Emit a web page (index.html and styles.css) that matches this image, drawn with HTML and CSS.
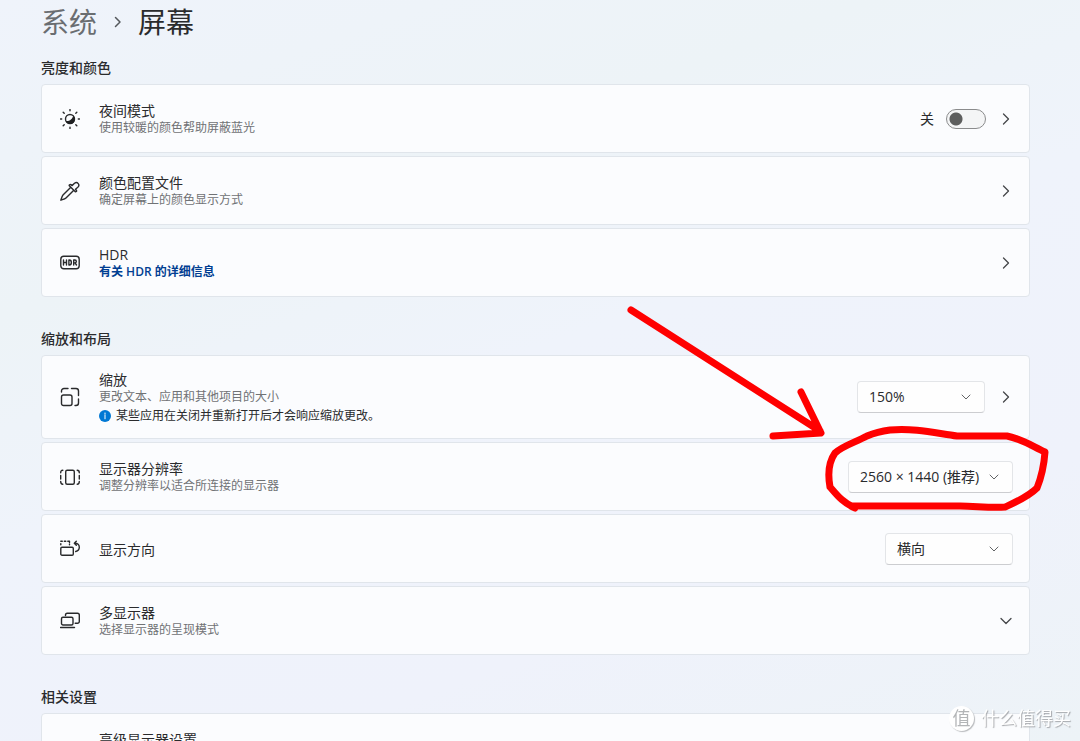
FILE: index.html
```html
<!DOCTYPE html>
<html lang="zh-CN">
<head>
<meta charset="utf-8">
<meta name="viewport" content="width=device-width, initial-scale=1">
<title>系统 › 屏幕</title>
<link rel="stylesheet" href="styles.css">
</head>
<body>
<main class="page">
  <h1 class="crumbs">
    <a class="crumb-parent" href="#system">系统</a>
    <svg class="crumb-sep" viewBox="0 0 12 14"><path d="M3.500 2.500 8 7l-4.500 4.500"/></svg>
    <span>屏幕</span>
  </h1>

  <section class="group">
    <h2 class="group-title">亮度和颜色</h2>
    <div class="card">
      <svg class="icon" viewBox="0 0 20 20"><circle cx="10" cy="10" r="4.500"/><path class="solid" d="M13.200 6.600A4.800 4.800 0 1 1 5.600 12c3.600.6 7-1.500 7.600-5.400z"/><path d="M10 .5v1.200M10 18.300v1.200M.5 10h1.200M18.300 10h1.200M3.200 3.200l1 1M15.800 15.800l1 1M3.200 16.800l1-1M15.800 4.200l1-1"/></svg>
      <div class="text">
        <label class="name" for="night">夜间模式</label>
        <span class="desc">使用较暖的颜色帮助屏蔽蓝光</span>
      </div>
      <span class="state">关</span>
      <input class="toggle" id="night" type="checkbox" role="switch">
      <button class="more" aria-label="夜间模式设置"><svg class="chevron" viewBox="0 0 14 14"><path d="M4.500 2 9.500 7l-5 5"/></svg></button>
    </div>
    <div class="card">
      <svg class="icon" viewBox="0 0 20 20"><path d="M10.800 6.200 3 14c-.7.700-1.300 2.600-2.200 5.200 2.600-.9 4.500-1.500 5.200-2.200l7.800-7.800M9.300 4.700l6 6c.5.500 1.700-.4 1.200-1.200l-1-1.300 2.300-1.900c2.600-2.400-.4-6.200-3.300-4.100l-2.300 2.400-1.300-1c-.8-.5-2.100.6-1.600 1.100z"/></svg>
      <div class="text">
        <span class="name">颜色配置文件</span>
        <span class="desc">确定屏幕上的颜色显示方式</span>
      </div>
      <button class="more" aria-label="颜色配置文件"><svg class="chevron" viewBox="0 0 14 14"><path d="M4.500 2 9.500 7l-5 5"/></svg></button>
    </div>
    <div class="card">
      <svg class="icon" viewBox="0 0 20 20"><rect x=".8" y="3.200" width="18.400" height="12.600" rx="3"/><path d="M3.500 7v5M6.500 7v5M3.500 9.500h3M8.900 7v5h.5c2.600 0 2.600-5 0-5zM13.700 12V7h1.200c1.900 0 1.900 2.900 0 2.900h-1.200M15.100 9.900l1.400 2.100"/></svg>
      <div class="text">
        <span class="name">HDR</span>
        <a class="link" href="#hdr">有关 HDR 的详细信息</a>
      </div>
      <button class="more" aria-label="HDR"><svg class="chevron" viewBox="0 0 14 14"><path d="M4.500 2 9.500 7l-5 5"/></svg></button>
    </div>
  </section>

  <section class="group">
    <h2 class="group-title">缩放和布局</h2>
    <div class="card card-tall">
      <svg class="icon" viewBox="0 0 20 20"><rect x="1.500" y="8" width="10.500" height="10.500" rx="2"/><path d="M1.500 5V4a2.500 2.500 0 0 1 2.500-2.500h4M11.500 1.500H16A2.500 2.500 0 0 1 18.500 4v4.500M18.500 12v4a2.500 2.500 0 0 1-2.500 2.500h-1"/></svg>
      <div class="text">
        <label class="name" for="scale">缩放</label>
        <span class="desc">更改文本、应用和其他项目的大小</span>
        <span class="note"><svg class="info" viewBox="0 0 12 12"><circle cx="6" cy="6" r="6"/><path d="M6 5.200v3.600M6 3v1.200"/></svg>某些应用在关闭并重新打开后才会响应缩放更改。</span>
      </div>
      <span class="picker">
        <select id="scale"><option>150%</option></select>
        <svg class="arrow" viewBox="0 0 10 10"><path d="M1 3l4 4 4-4"/></svg>
      </span>
      <button class="more" aria-label="缩放设置"><svg class="chevron" viewBox="0 0 14 14"><path d="M4.500 2 9.500 7l-5 5"/></svg></button>
    </div>
    <div class="card">
      <svg class="icon" viewBox="0 0 20 20"><rect x="5.700" y="3.200" width="8.600" height="14" rx="1.500"/><path d="M2.800 3.200C1.300 3.200.7 4 .7 5.800M.7 8.500v3.500M.7 14.500c0 1.900.6 2.700 2.100 2.700M17.200 3.200c1.500 0 2.100.8 2.100 2.600M19.300 8.500v3.500M19.300 14.500c0 1.900-.6 2.700-2.100 2.700"/></svg>
      <div class="text">
        <label class="name" for="resolution">显示器分辨率</label>
        <span class="desc">调整分辨率以适合所连接的显示器</span>
      </div>
      <span class="picker picker-wide">
        <select id="resolution"><option>2560 × 1440 (推荐)</option></select>
        <svg class="arrow" viewBox="0 0 10 10"><path d="M1 3l4 4 4-4"/></svg>
      </span>
      <svg class="marker" viewBox="620 300 440 220" aria-hidden="true">
        <path d="M631 310 820 431M801 392l20 41-48 3"/>
        <path d="M855 508C843 503 837 495 830 487 828 476 828 463 835 453 842 446 856 442 867 436 874 433 882 431 890 430 915 428 935 433 957 436H1007C1022 439 1032 446 1045 452 1044 466 1041 478 1037 488 1028 497 1016 502 1005 507 990 508 975 506 960 506H853"/>
      </svg>
    </div>
    <div class="card">
      <svg class="icon" viewBox="0 0 20 20"><rect x=".8" y="8.200" width="12.500" height="8" rx="1.200"/><path d="M.8 5.800V4.600M.8 2.200h1.500M4.300 2.200h1.500M7.800 2.200h1.700v1.200M9.500 5v.8M15.700 12.500c2.300-.6 3.600-2.200 3.600-4.300 0-2.400-1.700-4-4.300-4M16.300 2.200 14.300 4.200l2 2"/></svg>
      <div class="text"><label class="name" for="orientation">显示方向</label></div>
      <span class="picker">
        <select id="orientation"><option>横向</option></select>
        <svg class="arrow" viewBox="0 0 10 10"><path d="M1 3l4 4 4-4"/></svg>
      </span>
    </div>
    <div class="card">
      <svg class="icon" viewBox="0 0 20 20"><rect x="1.500" y="6.200" width="11.500" height="7.800" rx="1.500"/><path d="M5.500 4.500V4A1.800 1.800 0 0 1 7.300 2.200h10.200a1.800 1.800 0 0 1 1.800 1.800v6.500a1.800 1.800 0 0 1-1.800 1.800h-2.300M.5 16.500h14"/></svg>
      <div class="text">
        <span class="name">多显示器</span>
        <span class="desc">选择显示器的呈现模式</span>
      </div>
      <button class="more" aria-label="展开多显示器"><svg class="chevron" viewBox="0 0 14 14"><path d="M2 4.500 7 9.500l5-5"/></svg></button>
    </div>
  </section>

  <section class="group">
    <h2 class="group-title">相关设置</h2>
    <div class="card">
      <span class="icon"></span>
      <div class="text">
        <span class="name">高级显示器设置</span>
        <span class="desc">&nbsp;</span>
      </div>
    </div>
  </section>
</main>
<div class="watermark"><span class="seal">值</span><span>什么值得买</span></div>
</body>
</html>
```
FILE: styles.css
```css
* { box-sizing: border-box; }

html, body { height: 100%; }

body {
  margin: 0;
  color: #2a2b2d;
  font: 14px/18px "Open Sans", "Noto Sans CJK SC", sans-serif;
  background: linear-gradient(160deg, #eff3fb 0%, #edf3f7 28%, #eff3fb 48%, #eff2fb 75%, #edf3f7 100%);
}

.page {
  height: 100%;
  padding: 4px 50px 0 41px;
  overflow-y: auto;
  scrollbar-width: none;
}

.crumbs {
  display: flex;
  align-items: center;
  margin: 0 0 18px;
  font-size: 28px;
  line-height: 36px;
  font-weight: 400;
}

.crumb-parent { color: #6a6d71; text-decoration: none; }

svg {
  fill: none;
  stroke: #292a2c;
  stroke-linecap: round;
  stroke-linejoin: round;
}

.crumb-sep { width: 12px; height: 14px; margin: 0 14px 0 15px; stroke: #55585c; stroke-width: 1.5; }

.group + .group { margin-top: 32px; }

.group-title { margin: 0 0 6px; font-size: 14px; line-height: 20px; font-weight: 500; }

.card {
  position: relative;
  display: flex;
  align-items: center;
  min-height: 69px;
  padding: 0 16px 0 18px;
  border: 1px solid #e0e5eb;
  border-radius: 4px;
  background: #fbfcfe;
}

.card + .card { margin-top: 3px; }
.card-tall { min-height: 84px; }

.icon { flex: none; width: 20px; height: 20px; margin-right: 19px; stroke-width: 1.4; }
.icon .solid { fill: #1f2022; stroke: none; }

.text { display: flex; flex: 1; flex-direction: column; align-items: flex-start; gap: 1px; padding-top: 1px; }
.name { line-height: 17px; }
.desc, .link, .note { font-size: 12px; line-height: 16px; }
.desc { color: #707275; }
.link { color: #003e92; font-weight: 600; text-decoration: none; }
.note { display: flex; align-items: center; margin-top: 2px; }
.info { width: 12px; height: 12px; margin-right: 5px; stroke: #fff; }
.info circle { fill: #0078d4; stroke: none; }

.state { margin-right: 12px; }

.toggle {
  appearance: none;
  width: 40px;
  height: 20px;
  margin: 0 13px 0 0;
  border: 1px solid #8a8b8c;
  border-radius: 10px;
  background: radial-gradient(circle at 9px 9px, #5d5e5e 6px, #f4f5f6 7px);
}

.more { display: flex; padding: 0; border: 0; background: none; }
.chevron { width: 14px; height: 14px; stroke: #45474a; stroke-width: 1.3; }

.picker { display: grid; align-items: center; width: 128px; }
.picker-wide { width: 165px; }
.picker + .more { margin-left: 14px; }

.picker select, .arrow { grid-area: 1 / 1; }

.picker select {
  appearance: none;
  width: 100%;
  height: 32px;
  padding: 0 30px 0 11px;
  border: 1px solid #e3e5e8;
  border-bottom-color: #cccdd0;
  border-radius: 4px;
  background: #fefefe;
  color: inherit;
  font: inherit;
}

.arrow { justify-self: end; width: 10px; height: 10px; margin-right: 14px; stroke: #626466; pointer-events: none; }

.marker {
  position: absolute;
  right: -31px;
  bottom: -10px;
  z-index: 1;
  width: 440px;
  height: 220px;
  stroke: #f00;
  stroke-width: 7;
  pointer-events: none;
}

.watermark {
  position: fixed;
  right: 9px;
  bottom: 10px;
  display: flex;
  align-items: center;
  gap: 7px;
  color: #fff;
  font-size: 18px;
  line-height: 26px;
  text-shadow: 1px 1px 1px #a4a6aa;
}

.seal {
  width: 25px;
  height: 25px;
  border-radius: 50%;
  background: #fff;
  box-shadow: 1px 1px 1px #b8babd;
  color: #b3b5b7;
  line-height: 24px;
  text-align: center;
  text-shadow: none;
}
```
